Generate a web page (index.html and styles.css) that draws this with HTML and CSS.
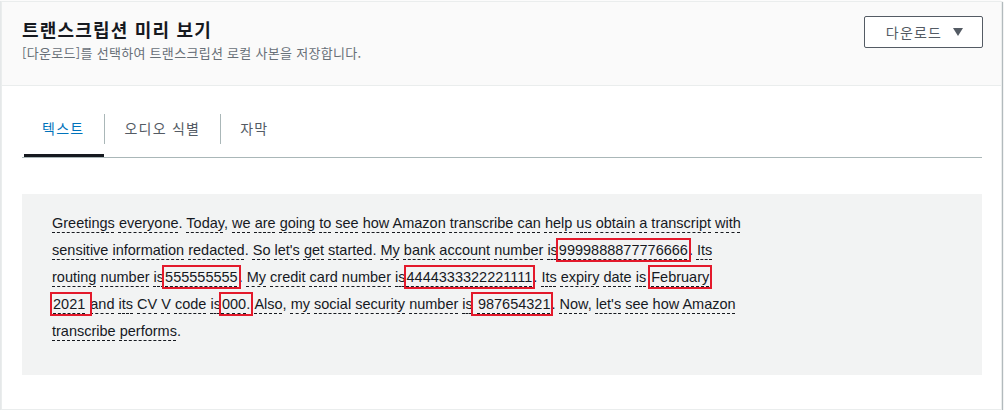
FILE: index.html
```html
<!DOCTYPE html>
<html lang="ko">
<head>
<meta charset="utf-8">
<link rel="stylesheet" href="styles.css">
</head>
<body>
<div class="card">
  <div class="card-header">
    <div class="header-text">
      <h2 class="title">트랜스크립션 미리 보기</h2>
      <p class="subtitle">[다운로드]를 선택하여 트랜스크립션 로컬 사본을 저장합니다.</p>
    </div>
    <button class="btn">다운로드 <span class="caret"></span></button>
  </div>
  <div class="card-body">
    <div class="tabs">
      <div class="tab active">텍스트</div>
      <div class="tab">오디오 식별</div>
      <div class="tab">자막</div>
    </div>
    <div class="transcript">
      <p class="words"><span class="w">Greetings</span> <span class="w">everyone</span>. <span class="w">Today</span>, <span class="w">we</span> <span class="w">are</span> <span class="w">going</span> <span class="w">to</span> <span class="w">see</span> <span class="w">how</span> <span class="w">Amazon</span> <span class="w">transcribe</span> <span class="w">can</span> <span class="w">help</span> <span class="w">us</span> <span class="w">obtain</span> <span class="w">a</span> <span class="w">transcript</span> <span class="w">with</span> <span class="w">sensitive</span> <span class="w">information</span> <span class="w">redacted</span>. <span class="w">So</span> <span class="w">let's</span> <span class="w">get</span> <span class="w">started</span>. <span class="w">My</span> <span class="w">bank</span> <span class="w">account</span> <span class="w">number</span> <span class="w">is</span><span class="red"><span class="w">9999888877776666</span></span>. <span class="w">Its</span> <span class="w">routing</span> <span class="w">number</span> <span class="w">is</span><span class="red"><span class="w">555555555</span></span>. <span class="w">My</span> <span class="w">credit</span> <span class="w">card</span> <span class="w">number</span> <span class="w">is</span><span class="red"><span class="w">4444333322221111</span></span>. <span class="w">Its</span> <span class="w">expiry</span> <span class="w">date</span> <span class="w">is</span> <span class="red"><span class="w">February</span></span> <span class="red"><span class="w">2021</span> </span><span class="w">and</span> <span class="w">its</span> <span class="w">CV</span> <span class="w">V</span> <span class="w">code</span> <span class="w">is</span><span class="red"><span class="w">000</span>.</span> <span class="w">Also</span>, <span class="w">my</span> <span class="w">social</span> <span class="w">security</span> <span class="w">number</span> <span class="w">is</span><span class="red"> <span class="w">987654321</span></span>. <span class="w">Now</span>, <span class="w">let's</span> <span class="w">see</span> <span class="w">how</span> <span class="w">Amazon</span> <span class="w">transcribe</span> <span class="w">performs</span>.</p>
    </div>
  </div>
</div>
</body>
</html>
```
FILE: styles.css
```css
* { box-sizing: border-box; }
html, body { margin: 0; padding: 0; background: #ffffff; }
body {
  padding: 1px 2px 0 1px;
  font-family: "Liberation Sans", "Noto Sans CJK KR", sans-serif;
  color: #16191f;
}
.card {
  border: 1px solid #eaeded;
  box-shadow: 1px 1px 1px 0 rgba(0, 28, 36, 0.3), -1px 0 1px 0 rgba(0, 28, 36, 0.1);
  height: 409px;
  background: #fff;
}
.card-header {
  display: flex;
  justify-content: space-between;
  align-items: flex-start;
  background: #fafafa;
  border-bottom: 1px solid #eaeded;
  padding: 14px 20px 0 20px;
  height: 84px;
}
.title {
  margin: 0;
  font-family: "Noto Sans CJK KR", sans-serif;
  font-size: 18px;
  font-weight: 700;
  line-height: 26px;
  letter-spacing: 1.2px;
  color: #16191f;
}
.subtitle {
  margin: 2px 0 0 0;
  font-family: "Noto Sans CJK KR", sans-serif;
  font-size: 13px;
  line-height: 18px;
  letter-spacing: 0.3px;
  color: #687078;
}
.btn {
  width: 119px;
  height: 32px;
  border: 1px solid #545b64;
  border-radius: 2px;
  background: #fff;
  color: #545b64;
  font-family: "Noto Sans CJK KR", sans-serif;
  font-size: 14px;
  letter-spacing: 1.2px;
  display: flex;
  align-items: center;
  justify-content: center;
  gap: 11px;
  padding: 0 0 0 2px;
  margin-right: -2px;
}
.caret {
  width: 0;
  height: 0;
  border-left: 5px solid transparent;
  border-right: 5px solid transparent;
  border-top: 8px solid #545b64;
}
.card-body {
  padding: 17px 19px 0 20px;
}
.tabs {
  display: flex;
  border-bottom: 1px solid #aab7b8;
  height: 55px;
  align-items: stretch;
}
.tab {
  position: relative;
  display: flex;
  align-items: center;
  padding: 0 20px 5px 20px;
  font-family: "Noto Sans CJK KR", sans-serif;
  font-size: 14px;
  letter-spacing: 1.25px;
  color: #545b64;
}
.tab + .tab::before {
  content: "";
  position: absolute;
  left: 0;
  top: 11px;
  height: 30px;
  border-left: 1px solid #aab7b8;
}
.tab.active { color: #0073bb; }
.tab.active::after {
  content: "";
  position: absolute;
  left: 2px;
  right: 0;
  bottom: 0;
  height: 3px;
  background: #16191f;
}
.transcript {
  margin-top: 36px;
  background: #f2f3f3;
  height: 181px;
  padding: 16px 30px 0 30px;
}
.words {
  margin: 0;
  max-width: 692px;
  font-size: 14.5px;
  line-height: 27px;
  color: #16191f;
}
.w {
  text-decoration: underline dashed #16191f;
  text-decoration-thickness: 1px;
  text-underline-offset: 4px;
}
.red {
  outline: 2px solid #e3192b;
  outline-offset: 0;
  padding: 2px 1px;
}
```
